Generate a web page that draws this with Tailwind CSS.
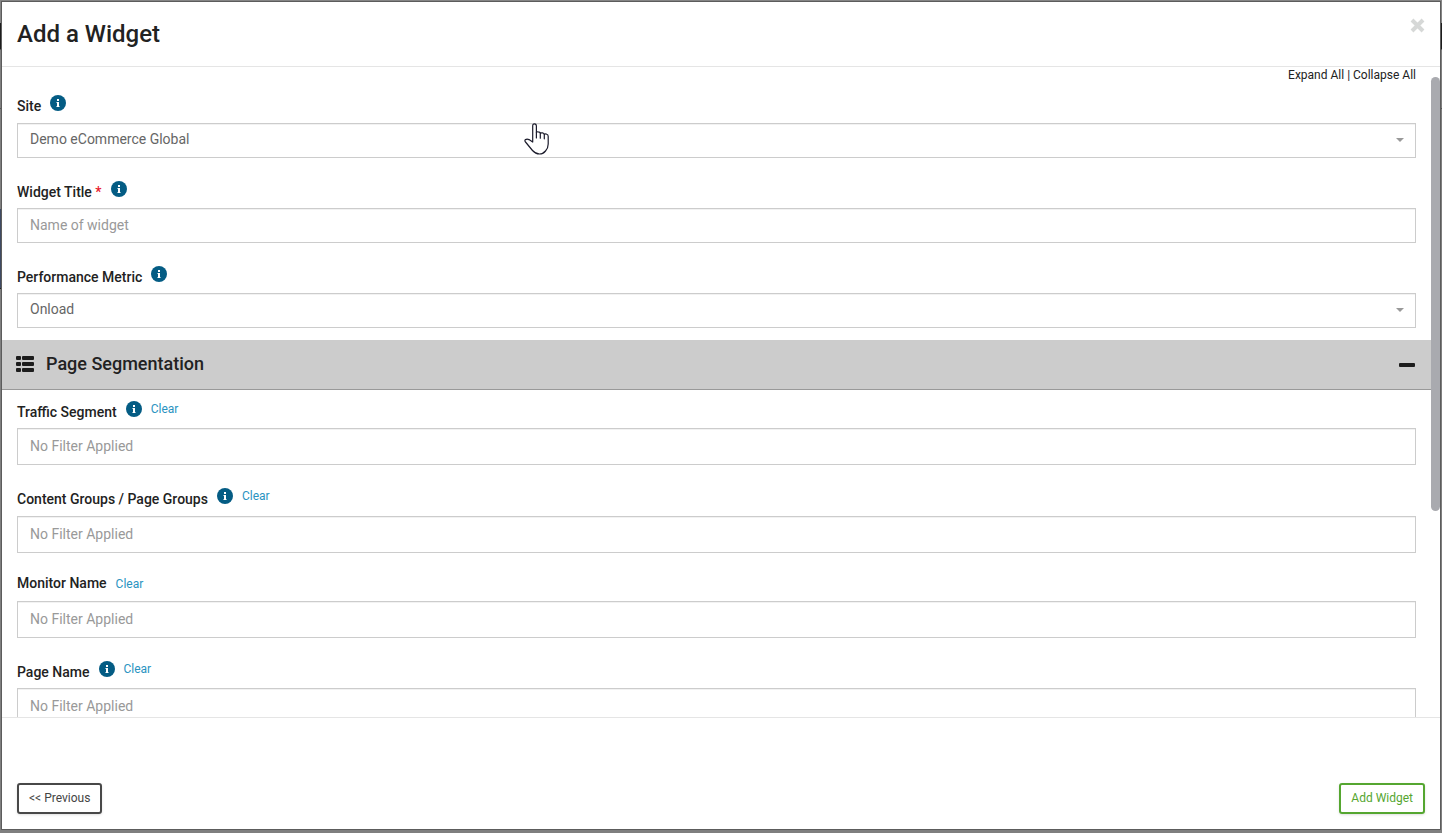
<!DOCTYPE html>
<html lang="en">

   <head>
      <meta charset="UTF-8">
      <meta name="viewport" content="width=device-width, initial-scale=1.0">
      <title>Add a Widget</title>
      <script src="https://cdn.jsdelivr.net/npm/@tailwindcss/browser@4"></script>
   </head>

   <body class="relative h-screen overflow-hidden bg-[#7f7f7f] px-px pt-px pb-[3px] font-[Roboto,sans-serif] text-sm text-[#222]">
      <!-- Dimmed page behind the dialog -->
      <div class="absolute inset-0 flex flex-col" aria-hidden="true">
         <div class="h-[23px] bg-[#858585]"></div>
         <div class="h-[26px] bg-[#1c1c1c]"></div>
         <div class="h-[60px] border-y border-[#555]"></div>
         <div class="h-[100px]"></div>
         <div class="h-[80px] w-1 border-b border-[#222] bg-[#3f4a63]"></div>
      </div>

      <!-- Icons -->
      <svg class="hidden">
         <symbol id="info" viewBox="0 0 16 16">
            <circle cx="8" cy="8" r="8" fill="#045c84" />
            <path d="M7 4h2v2H7zM6.500 7H9v4h.5v1h-3v-1H7V8h-.5z" fill="#fff" />
         </symbol>
      </svg>

      <div class="relative flex h-full flex-col border border-[#5c5c5c] bg-white" role="dialog" aria-labelledby="title">
         <div class="flex items-start justify-between border-b border-[#e5e5e5] px-[15px] py-4">
            <h1 id="title" class="text-2xl font-medium">Add a Widget</h1>
            <button aria-label="Close">
               <svg class="size-[15px]" viewBox="0 0 15 15" fill="none" stroke="#d6d8d7" stroke-width="4">
                  <path d="M2 2l11 11M13 2L2 13" />
               </svg>
            </button>
         </div>

         <div class="flex min-h-0 flex-1">
            <div class="min-w-0 flex-1 overflow-hidden">
               <div class="px-[15px] pb-3">
                  <div class="mb-3 text-right text-xs">
                     <a href="#">Expand All</a> | <a href="#">Collapse All</a>
                  </div>

                  <div class="mb-[22px]">
                     <div class="flex h-7 items-start gap-[9px]">
                        <label for="site" class="mt-px font-medium">Site</label>
                        <svg class="size-4"><use href="#info" /></svg>
                     </div>
                     <div class="relative">
                        <select id="site" class="block h-[35px] w-full appearance-none border border-[#ccc] bg-white px-3 pb-1 text-[#666] inset-shadow-2xs">
                           <option>Demo eCommerce Global</option>
                        </select>
                        <svg class="pointer-events-none absolute top-[15px] right-3 h-1 w-2" viewBox="0 0 8 4" fill="#999">
                           <path d="M0 0h8L4 4z" />
                        </svg>
                        <svg class="pointer-events-none absolute top-0 left-[507px] h-8 w-[25px]" viewBox="0 0 25 32" fill="#fff" stroke="#1b1b2b" stroke-width="1.200" stroke-linejoin="round" stroke-linecap="round">
                           <path d="M8.700 19V3Q8.700 .8 10.500 .8T12.400 3V9.500Q12.800 8.600 14.200 8.800Q16 9 16.300 10.200Q17 9.600 18.500 9.900Q20 10.200 20.300 11.300Q21.500 10.700 22.800 11.200Q24.200 11.700 24.200 13.500V21Q24.200 25 21.500 28Q19 31 15.500 31Q11.500 31 8.500 27.500L1.500 19Q.3 17.500 1.500 16.600Q3 15.800 5 16.600L8.700 19" />
                           <path d="M12.400 9.500v5.500M16.300 10.200v5M20.300 11.300v4.500" />
                        </svg>
                     </div>
                  </div>

                  <div class="mb-[22px]">
                     <div class="flex h-7 items-start gap-[9px]">
                        <label for="widgetTitle" class="mt-0.5 font-medium">Widget Title <span class="text-[#e8192c]">*</span></label>
                        <svg class="mt-px size-4"><use href="#info" /></svg>
                     </div>
                     <input id="widgetTitle" type="text" placeholder="Name of widget" class="block h-[35px] w-full border border-[#ccc] px-3 pb-0.5 inset-shadow-2xs placeholder:text-[#999]">
                  </div>

                  <div>
                     <div class="flex h-7 items-start gap-[9px]">
                        <label for="metric" class="mt-0.5 font-medium">Performance Metric</label>
                        <svg class="mt-px size-4"><use href="#info" /></svg>
                     </div>
                     <div class="relative">
                        <select id="metric" class="block h-[35px] w-full appearance-none border border-[#ccc] bg-white px-3 pb-1 text-[#666] inset-shadow-2xs">
                           <option>Onload</option>
                        </select>
                        <svg class="pointer-events-none absolute top-[15px] right-3 h-1 w-2" viewBox="0 0 8 4" fill="#999">
                           <path d="M0 0h8L4 4z" />
                        </svg>
                     </div>
                  </div>
               </div>

               <div class="flex h-[50px] items-center border-b border-[#999] bg-[#ccc] px-[15px] pb-0.5">
                  <svg class="-ml-px h-4 w-[18px]" viewBox="0 0 18 16" fill="#1c1c1c">
                     <rect width="5" height="4" rx="1" />
                     <rect x="6" width="12" height="4" rx="1" />
                     <rect y="6" width="5" height="4" rx="1" />
                     <rect x="6" y="6" width="12" height="4" rx="1" />
                     <rect y="12" width="5" height="4" rx="1" />
                     <rect x="6" y="12" width="12" height="4" rx="1" />
                  </svg>
                  <h2 class="ml-3 text-lg font-medium">Page Segmentation</h2>
                  <button class="mr-px ml-auto pt-0.5" aria-label="Collapse section">
                     <svg class="h-1 w-4" viewBox="0 0 16 4"><rect width="16" height="4" rx="1" fill="#1c1c1c" /></svg>
                  </button>
               </div>

               <div class="px-[15px] pt-2.5">
                  <div class="mb-[23px]">
                     <div class="flex h-7 items-start gap-[9px]">
                        <label for="traffic" class="mt-0.5 font-medium">Traffic Segment</label>
                        <svg class="mt-px size-4"><use href="#info" /></svg>
                        <a href="#" class="mt-px text-xs text-[#2a93c1]">Clear</a>
                     </div>
                     <input id="traffic" type="text" placeholder="No Filter Applied" class="block h-[37px] w-full border border-[#ccc] px-3 pb-0.5 inset-shadow-2xs placeholder:text-[#999]">
                  </div>

                  <div class="mb-5">
                     <div class="flex h-7 items-start gap-[9px]">
                        <label for="groups" class="mt-px font-medium">Content Groups / Page Groups</label>
                        <svg class="size-4"><use href="#info" /></svg>
                        <a href="#" class="text-xs text-[#2a93c1]">Clear</a>
                     </div>
                     <input id="groups" type="text" placeholder="No Filter Applied" class="block h-[37px] w-full border border-[#ccc] px-3 pb-0.5 inset-shadow-2xs placeholder:text-[#999]">
                  </div>

                  <div class="mb-[22px]">
                     <div class="flex h-7 items-baseline gap-[9px]">
                        <label for="monitor" class="font-medium">Monitor Name</label>
                        <a href="#" class="text-xs text-[#2a93c1]">Clear</a>
                     </div>
                     <input id="monitor" type="text" placeholder="No Filter Applied" class="block h-[37px] w-full border border-[#ccc] px-3 pb-0.5 inset-shadow-2xs placeholder:text-[#999]">
                  </div>

                  <div>
                     <div class="flex h-7 items-start gap-[9px]">
                        <label for="pageName" class="mt-0.5 font-medium">Page Name</label>
                        <svg class="mt-px size-4"><use href="#info" /></svg>
                        <a href="#" class="mt-px text-xs text-[#2a93c1]">Clear</a>
                     </div>
                     <input id="pageName" type="text" placeholder="No Filter Applied" class="block h-[37px] w-full border border-[#ccc] px-3 pb-0.5 inset-shadow-2xs placeholder:text-[#999]">
                  </div>
               </div>
            </div>

            <!-- Scrollbar -->
            <div class="w-[9px] pt-2.5">
               <div class="h-[434px] rounded-full bg-[#a9aaaf]"></div>
            </div>
         </div>

         <div class="flex justify-between border-t border-[#e5e5e5] px-[15px] pt-[65px] pb-[15px]">
            <button class="h-[31px] rounded-[3px] border-2 border-[#484848] px-2.5 pb-0.5 text-xs text-[#444] shadow-sm">&lt;&lt; Previous</button>
            <button class="h-[31px] rounded-[3px] border-2 border-[#55a630] px-2.5 pb-0.5 text-xs text-[#55a630] shadow-sm">Add Widget</button>
         </div>
      </div>
   </body>

</html>
